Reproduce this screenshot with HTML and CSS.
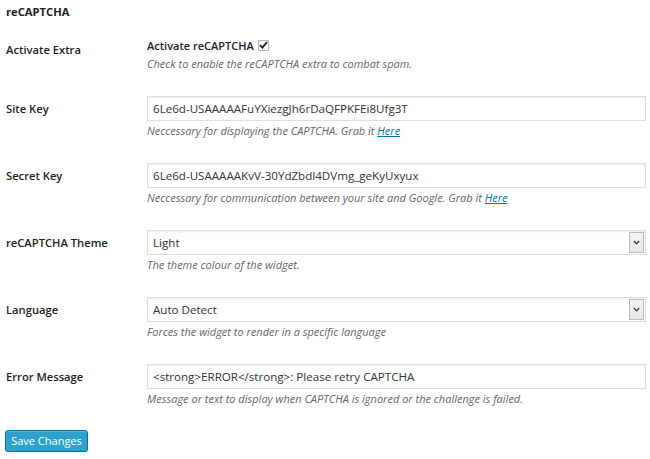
FILE: index.html
```html
<!DOCTYPE html>
<html>
<head>
<meta charset="utf-8">
<link rel="stylesheet" href="styles.css">
</head>
<body>
<div class="page">
  <h3 class="title">reCAPTCHA</h3>
  <div class="form">
    <div class="row row-check">
      <div class="label">Activate Extra</div>
      <div class="field">
        <div class="check-line"><span class="check-text">Activate reCAPTCHA</span><span class="checkbox"><svg width="9" height="8" viewBox="0 0 9 8"><path d="M1 4.2 L3.4 6.6 L8 1.2" fill="none" stroke="#222" stroke-width="1.8"/></svg></span></div>
        <p class="desc">Check to enable the reCAPTCHA extra to combat spam.</p>
      </div>
    </div>
    <div class="row">
      <div class="label">Site Key</div>
      <div class="field">
        <div class="input">6Le6d-USAAAAAFuYXiezgJh6rDaQFPKFEi8Ufg3T</div>
        <p class="desc">Neccessary for displaying the CAPTCHA. Grab it <a class="link">Here</a></p>
      </div>
    </div>
    <div class="row">
      <div class="label">Secret Key</div>
      <div class="field">
        <div class="input">6Le6d-USAAAAAKvV-30YdZbdl4DVmg_geKyUxyux</div>
        <p class="desc">Neccessary for communication between your site and Google. Grab it <a class="link">Here</a></p>
      </div>
    </div>
    <div class="row">
      <div class="label">reCAPTCHA Theme</div>
      <div class="field">
        <div class="input select"><span class="select-value">Light</span><span class="arrow"><svg width="7" height="5" viewBox="0 0 7 5"><path d="M0.8 1 L3.5 3.7 L6.2 1" fill="none" stroke="#444" stroke-width="1.4"/></svg></span></div>
        <p class="desc">The theme colour of the widget.</p>
      </div>
    </div>
    <div class="row">
      <div class="label">Language</div>
      <div class="field">
        <div class="input select"><span class="select-value">Auto Detect</span><span class="arrow"><svg width="7" height="5" viewBox="0 0 7 5"><path d="M0.8 1 L3.5 3.7 L6.2 1" fill="none" stroke="#444" stroke-width="1.4"/></svg></span></div>
        <p class="desc">Forces the widget to render in a specific language</p>
      </div>
    </div>
    <div class="row">
      <div class="label">Error Message</div>
      <div class="field">
        <div class="input">&lt;strong&gt;ERROR&lt;/strong&gt;: Please retry CAPTCHA</div>
        <p class="desc">Message or text to display when CAPTCHA is ignored or the challenge is failed.</p>
      </div>
    </div>
  </div>
  <div class="actions"><button class="button">Save Changes</button></div>
</div>
</body>
</html>
```
FILE: styles.css
```css
html, body {
  margin: 0;
  padding: 0;
  background: #fff;
}
body {
  font-family: "Open Sans", "Liberation Sans", sans-serif;
  font-size: 11px;
  color: #222;
}
.page {
  padding: 0 4px 0 6px;
}
.title {
  margin: 4px 0 0;
  font-size: 11.2px;
  font-weight: 700;
  line-height: 16px;
  color: #222;
}
.form {
  display: flex;
  flex-direction: column;
  margin-top: 5px;
}
.row {
  display: grid;
  grid-template-columns: 141px 1fr;
  padding: 12px 0;
}
.label {
  font-weight: 600;
  font-size: 11.2px;
  line-height: 25px;
  color: #222;
}
.field {
  display: flex;
  flex-direction: column;
}
.check-line {
  display: flex;
  align-items: center;
  gap: 4px;
  height: 16px;
}
.check-text {
  font-weight: 600;
  font-size: 11px;
  color: #222;
}
.checkbox {
  width: 9px;
  height: 9px;
  border: 1px solid #b4b9be;
  background: #fff;
  display: flex;
  align-items: center;
  justify-content: center;
  box-shadow: inset 0 1px 2px rgba(0,0,0,.1);
}
.checkbox svg {
  display: block;
}
.desc {
  margin: 2px 0 0;
  font-style: italic;
  color: #666;
  line-height: 16px;
  font-size: 11px;
}
.row-check .desc {
  margin-top: 3px;
}
.link {
  color: #0074a2;
  text-decoration: underline;
}
.input {
  box-sizing: border-box;
  height: 25px;
  border: 1px solid #ddd;
  box-shadow: inset 0 1px 2px rgba(0,0,0,.07);
  background: #fff;
  color: #333;
  padding: 0 5px;
  line-height: 23px;
  font-size: 11.6px;
}
.select {
  display: flex;
  justify-content: space-between;
  align-items: stretch;
  padding-right: 1px;
}
.arrow {
  width: 13px;
  margin: 1px 0;
  border: 1px solid #bbb;
  background: linear-gradient(#f4f4f4, #e6e6e6);
  display: flex;
  align-items: center;
  justify-content: center;
}
.actions {
  padding-top: 11px;
}
.button {
  font-family: "Open Sans", "Liberation Sans", sans-serif;
  font-size: 11px;
  color: #fff;
  background: #2ea2cc;
  border: 1px solid #0074a2;
  border-radius: 3px;
  box-shadow: inset 0 1px 0 rgba(120,200,230,.5), 0 1px 0 rgba(0,0,0,.15);
  height: 22px;
  width: 83px;
  padding: 0;
  margin-left: -1px;
  line-height: 20px;
}
```
